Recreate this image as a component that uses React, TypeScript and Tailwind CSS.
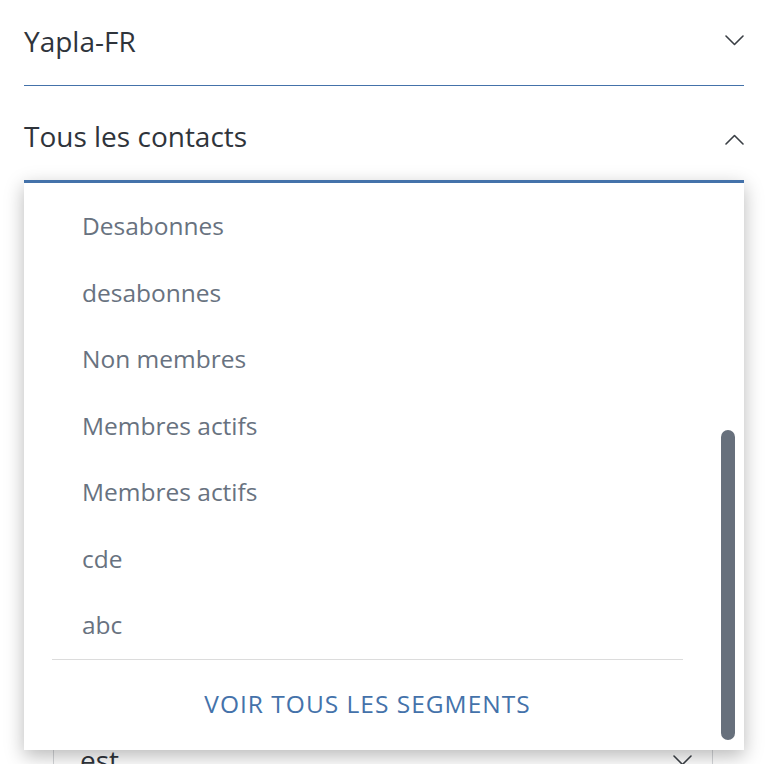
const segments = [
    "Desabonnes",
    "desabonnes",
    "Non membres",
    "Membres actifs",
    "Membres actifs",
    "cde",
    "abc",
];

function Chevron({ up = false, className = "" }: { up?: boolean; className?: string }) {
    return (
        <svg width="19" height="11" viewBox="0 0 19 11" fill="none" className={"text-[#3a3f45] " + className}>
            <polyline
                points={up ? "1,10 9.5,1.5 18,10" : "1,1 9.5,9.5 18,1"}
                stroke="currentColor"
                strokeWidth="1.6"
                strokeLinecap="round"
                strokeLinejoin="round"
            />
        </svg>
    );
}

export default function App() {
    return (
        <div className="relative h-[764px] w-[774px] overflow-hidden bg-white font-['Open_Sans','Lato',sans-serif]">
            <div className="pl-6 pr-[30px]">
                {/* Organisation */}
                <div className="flex h-[86px] items-center justify-between border-b border-[#4472aa] pb-1">
                    <span className="text-[28px] text-[#2f343b]">Yapla-FR</span>
                    <Chevron />
                </div>

                {/* Segment */}
                <div className="flex h-[94px] items-center justify-between pt-[6px]">
                    <span className="text-[28px] text-[#2f343b]">Tous les contacts</span>
                    <Chevron up className="mt-[6px]" />
                </div>

                {/* form underneath */}
                <div className="pl-[29px] pr-[31px] pt-[550px]">
                    <div className="flex h-[60px] items-center justify-between border border-[#d5d7da] pl-[26px] pr-[20px]">
                        <span className="text-[28px] text-[#2f343b]">est</span>
                        <Chevron />
                    </div>
                </div>
            </div>

            {/* Dropdown menu */}
            <div className="absolute left-6 top-[180px] h-[570px] w-[720px] border-t-[3px] border-[#4472aa] bg-white shadow-[0_6px_18px_rgba(0,0,0,0.28)]">
                <div className="w-[687px] pt-[10px]">
                    {segments.map((s, i) => (
                        <div key={i} className="flex h-[66.6px] items-center pl-[58px] text-[24.5px] text-[#687280]">
                            {s}
                        </div>
                    ))}
                    <div className="mx-7 border-t border-[#dcdcdc]" />
                    <div className="flex h-[89px] items-center justify-center text-[24.5px] tracking-[1px] text-[#4472aa]">
                        VOIR TOUS LES SEGMENTS
                    </div>
                </div>
                <div className="absolute right-[9px] top-[247px] h-[310px] w-[14px] rounded-full bg-[#67707c]" />
            </div>
        </div>
    );
}
